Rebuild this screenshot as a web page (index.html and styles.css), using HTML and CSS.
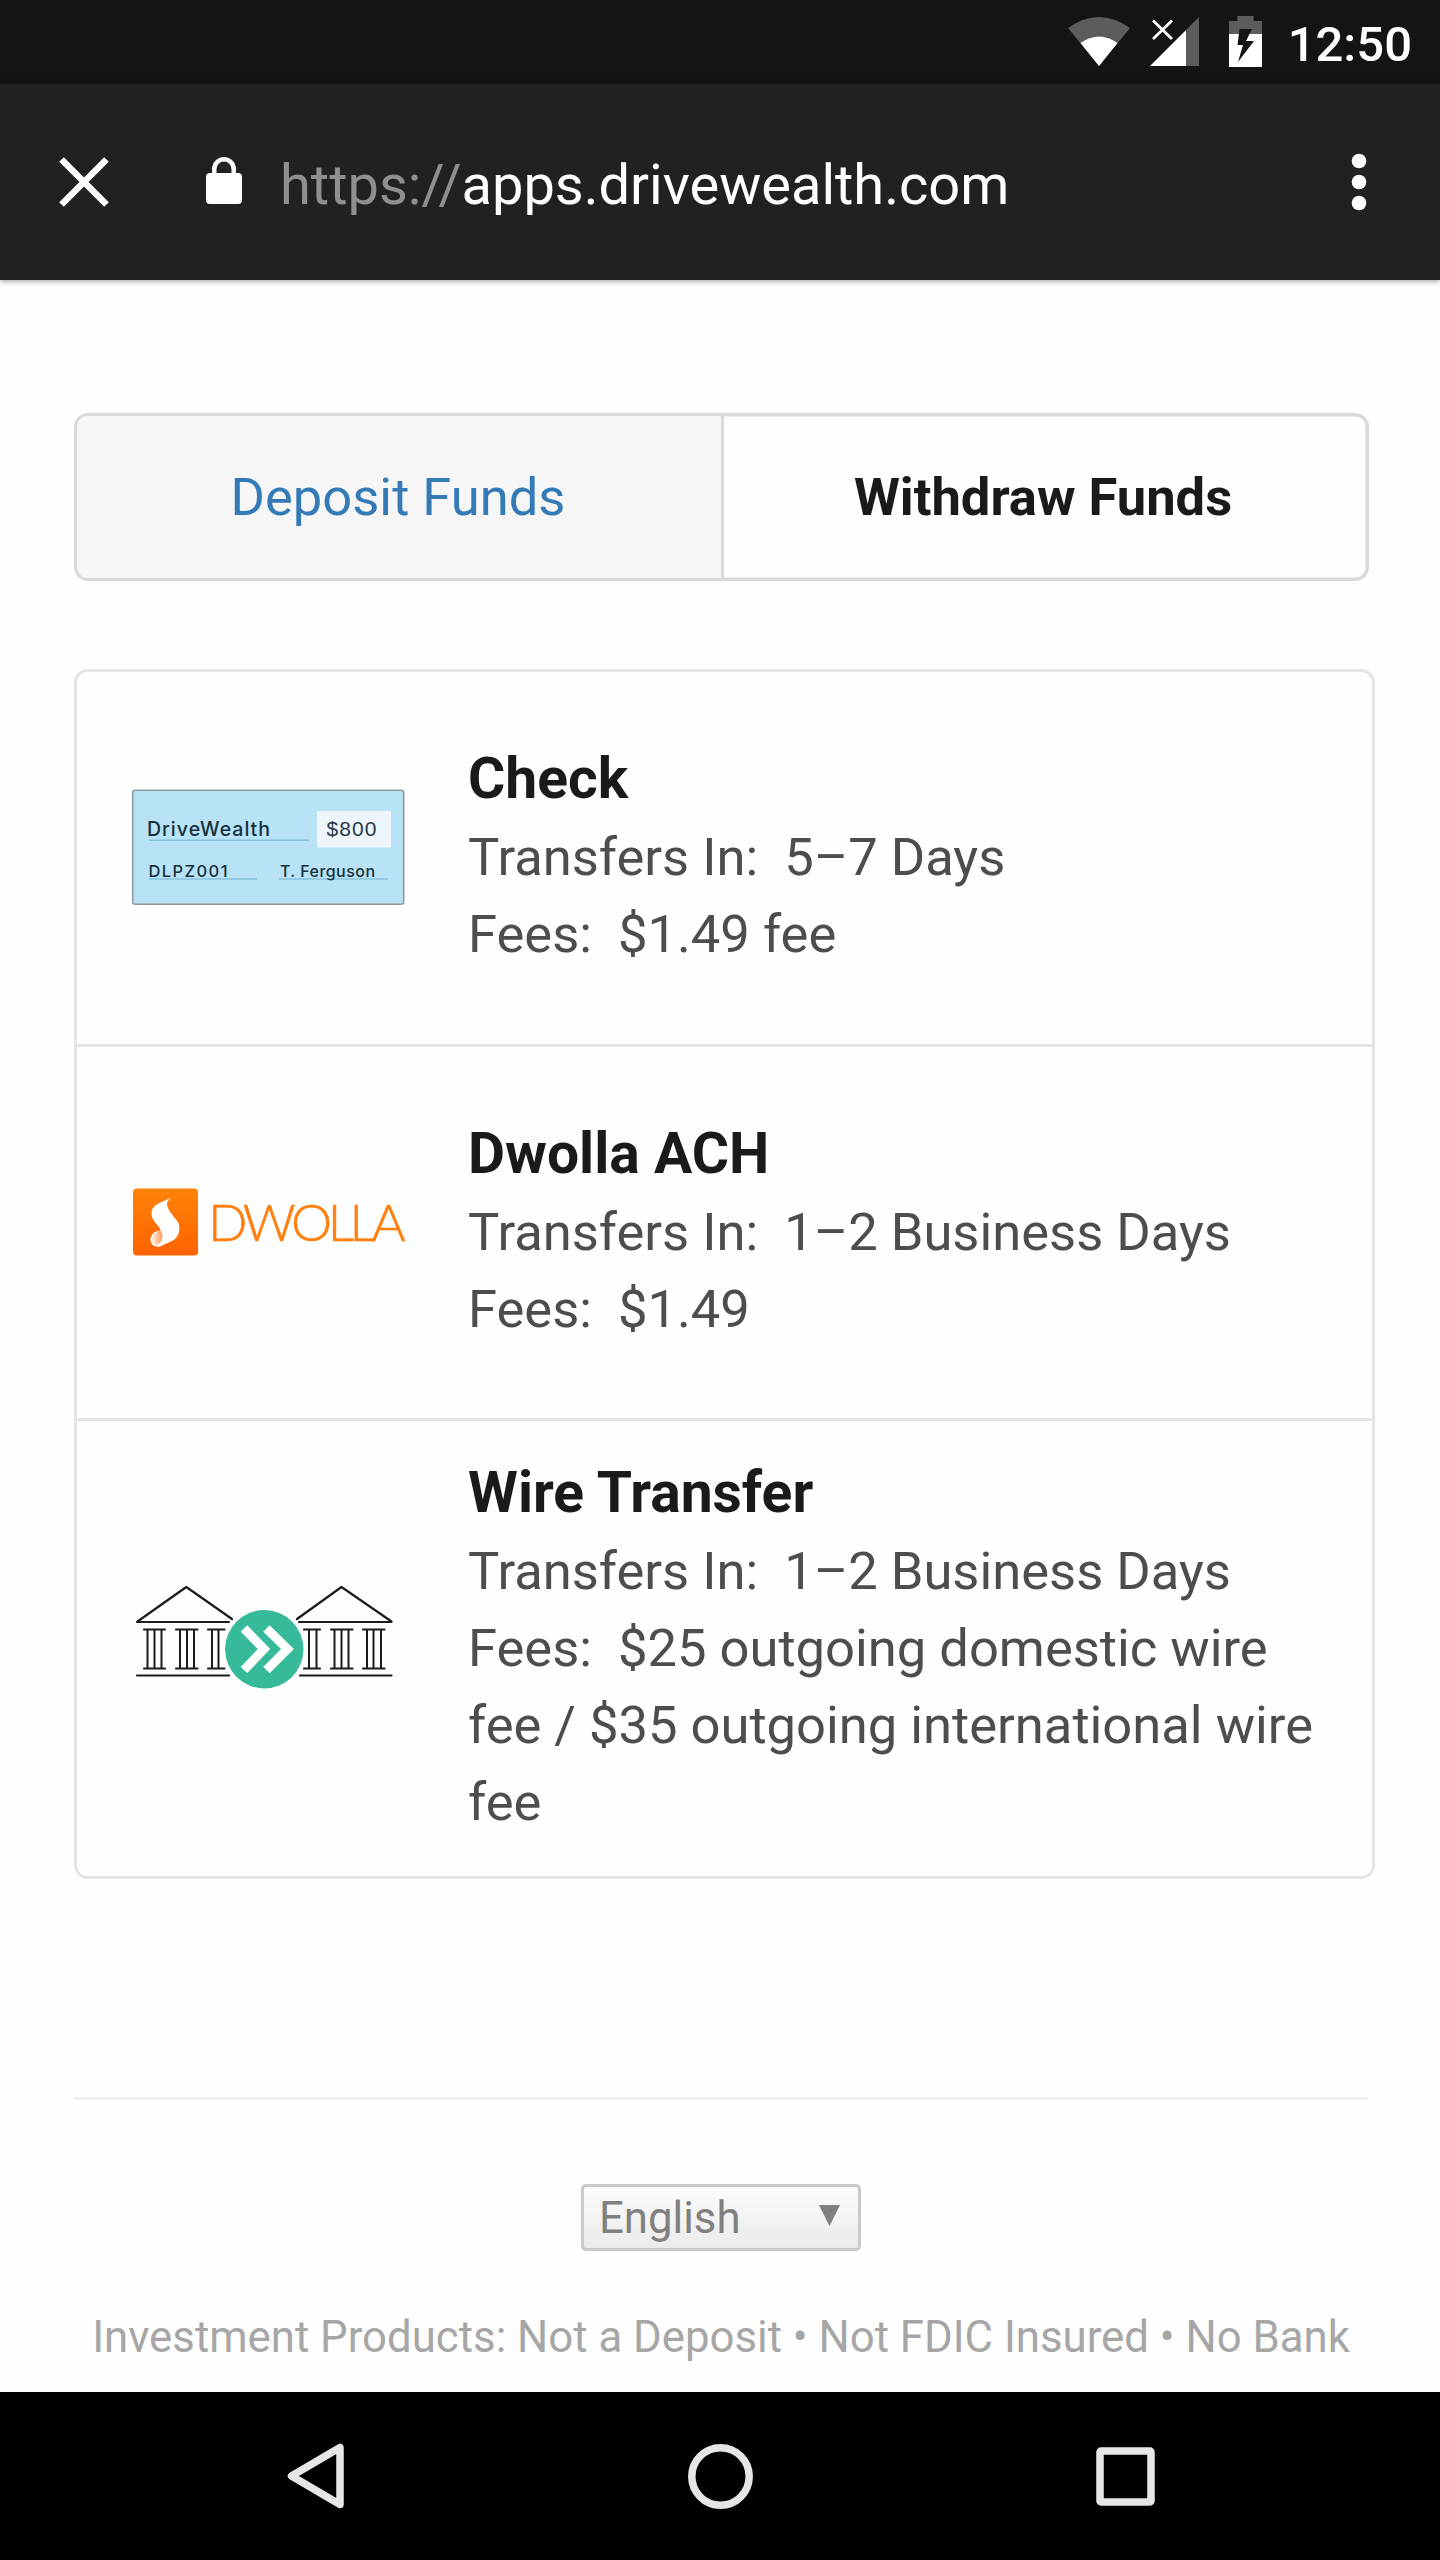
FILE: index.html
```html
<!DOCTYPE html>
<html lang="en">
<head>
<meta charset="utf-8">
<title>Transfer Funds</title>
<link rel="stylesheet" href="styles.css">
</head>
<body>
<div class="screen">
  <header class="status">
    <svg class="status-icons" viewBox="1066 14 198 56" aria-hidden="true">
      <path d="M1068 28Q1099 6 1130 28L1099 66Z" fill="#5c5c5c"/>
      <path d="M1080.500 43Q1099 30 1117.500 43L1099 66Z" fill="#fff"/>
      <path d="M1199 17V66H1186V30Z" fill="#5c5c5c"/>
      <path d="M1150 66L1186 30V66Z" fill="#fff"/>
      <path d="M1153 20.500L1172 39M1172 20.500L1153 39" stroke="#fff" stroke-width="2.800"/>
      <path d="M1229 34V21H1237.300V16H1253.700V21H1262V34Z" fill="#5c5c5c"/>
      <path d="M1229 34H1262V67H1229Z" fill="#fff"/>
      <path d="M1239.500 29H1252L1246 41H1254L1238 62L1243 45H1237.500Z" fill="#141414"/>
    </svg>
    <span class="clock">12:50</span>
  </header>
  <div class="toolbar">
    <svg class="close" viewBox="0 0 50 50" aria-hidden="true"><path d="M2.500 2.500L47.500 47.500M47.500 2.500L2.500 47.500" stroke="#fff" stroke-width="6.500"/></svg>
    <svg class="lock" viewBox="0 0 36 47" aria-hidden="true"><rect y="16" width="36" height="31" rx="4" fill="#fff"/><path d="M8.300 18V12a9.700 9.700 0 0 1 19.400 0V18" fill="none" stroke="#fff" stroke-width="4.500"/></svg>
    <div class="url"><span class="scheme">https://</span>apps.drivewealth.com</div>
    <svg class="menu" viewBox="0 0 16 58" aria-hidden="true"><g fill="#fff"><circle cx="8" cy="8" r="7.300"/><circle cx="8" cy="29" r="7.300"/><circle cx="8" cy="50" r="7.300"/></g></svg>
  </div>
  <main class="page">
    <nav class="tabs">
      <a class="tab tab-link">Deposit Funds</a>
      <a class="tab tab-current">Withdraw Funds</a>
    </nav>
    <section class="methods">
      <article class="method">
        <svg class="art" viewBox="132 787.500 273 140">
          <rect x="132.700" y="789.700" width="271" height="114" rx="2.500" fill="#b8e2f5" stroke="#8f999e" stroke-width="1.600"/>
          <path d="M149 839.700H309M149 878.500H257M279 878.500H388" stroke="#86c3dd" stroke-width="1.500"/>
          <rect x="317" y="810.500" width="74" height="36.500" fill="#eef6fb"/>
          <g class="hand">
            <text x="147" y="835.500" font-size="19.500" textLength="123">DriveWealth</text>
            <text x="148.500" y="876.500" font-size="16.500" textLength="79">DLPZ001</text>
            <text x="280" y="876.500" font-size="16" textLength="95">T. Ferguson</text>
          </g>
          <text class="amount" x="326.500" y="835" font-size="21" textLength="50">$800</text>
        </svg>
        <div class="info">
          <h2>Check</h2>
          <p>Transfers In:&nbsp; 5–7 Days</p>
          <p>Fees:&nbsp; $1.49 fee</p>
        </div>
      </article>
      <article class="method">
        <svg class="art" viewBox="132 1162 273 140">
          <defs>
            <linearGradient id="flame" x1="0" y1="0" x2="0" y2="1"><stop offset="0" stop-color="#ff8408"/><stop offset="1" stop-color="#ff6200"/></linearGradient>
            <linearGradient id="curl" x1="0" y1="0" x2="1" y2="0"><stop offset="0" stop-color="#fff0e5"/><stop offset="1" stop-color="#ff9a55"/></linearGradient>
          </defs>
          <rect x="133" y="1188.500" width="65" height="67" rx="4" fill="url(#flame)"/>
          <path d="M171 1197.500C164 1202 152 1203.500 151.500 1213C151 1220 158 1224 161 1231C158 1229.500 150 1233 150.500 1240C150.800 1245 155 1247.500 160 1246.500L173 1240.500C179 1237 181.500 1228 177.500 1221.500C173 1215 167.500 1210 167 1204.500C167 1201 169 1199.500 171 1197.500Z" fill="#fff"/>
          <path d="M161 1231C164 1237 162 1243 157 1245C152 1244 151 1239 153 1235.500C155 1232.500 158 1231 161 1231Z" fill="url(#curl)"/>
          <text class="dwolla" x="208" y="1240.500" textLength="197.500" lengthAdjust="spacing">DWOLLA</text>
        </svg>
        <div class="info">
          <h2>Dwolla ACH</h2>
          <p>Transfers In:&nbsp; 1–2 Business Days</p>
          <p>Fees:&nbsp; $1.49</p>
        </div>
      </article>
      <article class="method">
        <svg class="art" viewBox="132 1579 273 140">
          <g fill="none" stroke="#1c1c1c" stroke-width="2.200" stroke-linejoin="round" stroke-linecap="round">
            <path d="M232 1619L186.300 1587L137.500 1621.500M137 1622H229M137 1675.500H229"/>
            <path d="M297 1619L341.500 1587L391.500 1621.500M299 1622H391.500M300 1675.500H391.500"/>
            <path d="M144 1629.500H165M144 1668.500H165M176 1629.500H197.500M176 1668.500H197.500M208 1629.500H224.500M208 1668.500H224.500"/>
            <path d="M304 1629.500H320M304 1668.500H320M331 1629.500H352.500M331 1668.500H352.500M363 1629.500H384.500M363 1668.500H384.500"/>
          </g>
          <g fill="none" stroke="#1c1c1c" stroke-width="2">
            <path d="M147.500 1630V1668M154.500 1630V1668M161.500 1630V1668M180 1630V1668M187 1630V1668M194 1630V1668M212 1630V1668M218.500 1630V1668"/>
            <path d="M309 1630V1668M316.500 1630V1668M334.500 1630V1668M341.500 1630V1668M348.500 1630V1668M367 1630V1668M373.500 1630V1668M381 1630V1668"/>
          </g>
          <circle cx="264.300" cy="1649.200" r="41" fill="#fff"/>
          <circle cx="264.300" cy="1649.200" r="39.200" fill="#37ba9a"/>
          <path d="M244 1628.500L264 1649L244 1670M266.500 1628.500L287.500 1649L266.500 1670" fill="none" stroke="#fff" stroke-width="9"/>
        </svg>
        <div class="info">
          <h2>Wire Transfer</h2>
          <p>Transfers In:&nbsp; 1–2 Business Days</p>
          <p>Fees:&nbsp; $25 outgoing domestic wire fee / $35 outgoing international wire fee</p>
        </div>
      </article>
    </section>
    <footer class="footer">
      <div class="language"><span>English</span><svg class="arrow" viewBox="0 0 21 21" aria-hidden="true"><path d="M0 0H21L10.500 21Z" fill="#808080"/></svg></div>
      <p class="notice">Investment Products: Not a Deposit • Not FDIC Insured • No Bank</p>
    </footer>
  </main>
  <nav class="navbar">
    <svg viewBox="0 0 70 70" aria-hidden="true"><path d="M11.500 35L60 6.500V63.500Z"/></svg>
    <svg viewBox="0 0 70 70" aria-hidden="true"><circle cx="35.500" cy="35.500" r="28.700"/></svg>
    <svg viewBox="0 0 70 70" aria-hidden="true"><rect x="10" y="10" width="51" height="51" rx="1"/></svg>
  </nav>
</div>
</body>
</html>
```
FILE: styles.css
```css
* { box-sizing: border-box; }
body { margin: 0; background: #fefefe; font-family: Roboto, "Liberation Sans", sans-serif; }
h2, p { margin: 0; }
svg { display: block; flex: none; }

.screen { width: 1440px; height: 2560px; display: flex; flex-direction: column; overflow: hidden; }

.status { height: 84px; flex: none; background: #141414; display: flex; justify-content: flex-end; align-items: flex-start; padding: 15px 28px 0 0; }
.status-icons { width: 198px; height: 56px; margin: -1px 24px 0 0; }
.clock { color: #fff; font-size: 49px; font-weight: 500; line-height: 60px; }

.toolbar { position: relative; height: 196px; flex: none; background: #212121; display: flex; align-items: center; padding: 0 73px 0 59px; box-shadow: 0 1px 6px rgba(0, 0, 0, .4); }
.close { width: 50px; height: 50px; }
.lock { width: 36px; height: 47px; margin: -3px 38px 0 97px; }
.url { color: #fff; font-size: 56px; line-height: 64px; flex: 1; padding-top: 6px; }
.scheme { color: #8f8f8f; }
.menu { width: 16px; height: 58px; }

.page { flex: 1; min-height: 0; overflow: hidden; padding: 133px 65px 0 74px; }

.tabs { width: 1295px; height: 168px; display: grid; grid-template-columns: 647px 1fr; border: 3.500px solid #d9d9d9; border-radius: 14px; overflow: hidden; box-shadow: inset 0 0 0 .5px #d9d9d9; }
.tab { display: flex; align-items: center; justify-content: center; font-size: 52.500px; }
.tab-link { background: #f6f6f6; color: #337ab7; border-right: 3.500px solid #d9d9d9; padding-right: 2px; }
.tab-current { color: #1a1a1a; font-weight: 700; padding-right: 4px; }

.methods { margin-top: 88px; border: 3.500px solid #e5e5e5; border-radius: 14px; }
.method { min-height: 374.500px; display: flex; align-items: center; gap: 63px; padding: 35px 40px 35px 55px; border-bottom: 3.500px solid #e5e5e5; }
.method:last-child { border-bottom: 0; }
.art { width: 273px; height: 140px; overflow: visible; }
.info { flex: 1; color: #4d4d4d; font-size: 52.500px; line-height: 77px; }
.info h2 { color: #1a1a1a; font-size: 57px; font-weight: 700; line-height: 73px; padding-bottom: 4px; }
.hand { font-family: Inter, sans-serif; font-weight: 500; fill: #14303c; }
.amount { font-family: "Liberation Sans", sans-serif; fill: #263a48; }
.dwolla { font-family: Lato, sans-serif; font-weight: 300; font-size: 52px; fill: #ff7f0e; stroke: #ff7f0e; stroke-width: .6px; }

.footer { width: 1294px; margin-top: 218px; border-top: 3.500px solid #f0f0f0; display: flex; flex-direction: column; align-items: center; padding-top: 84px; }
.language { width: 280px; height: 67px; display: flex; align-items: center; justify-content: space-between; padding: 0 18px 0 15px; border: 3.500px solid #c9c9c9; border-radius: 5px; background: linear-gradient(#fcfcfc, #ebebeb); color: #808080; font-size: 43.750px; line-height: 60px; }
.arrow { width: 21px; height: 21px; margin-top: -5px; }
.notice { margin-top: 56px; color: #a6a6a6; font-size: 43.750px; line-height: 60px; white-space: nowrap; }

.navbar { height: 168px; flex: none; background: #000; display: flex; justify-content: space-between; align-items: center; padding: 0 280px 0 280px; }
.navbar svg { width: 70px; height: 70px; fill: none; stroke: #e6e6e6; stroke-width: 7.500; stroke-linejoin: round; }
```
